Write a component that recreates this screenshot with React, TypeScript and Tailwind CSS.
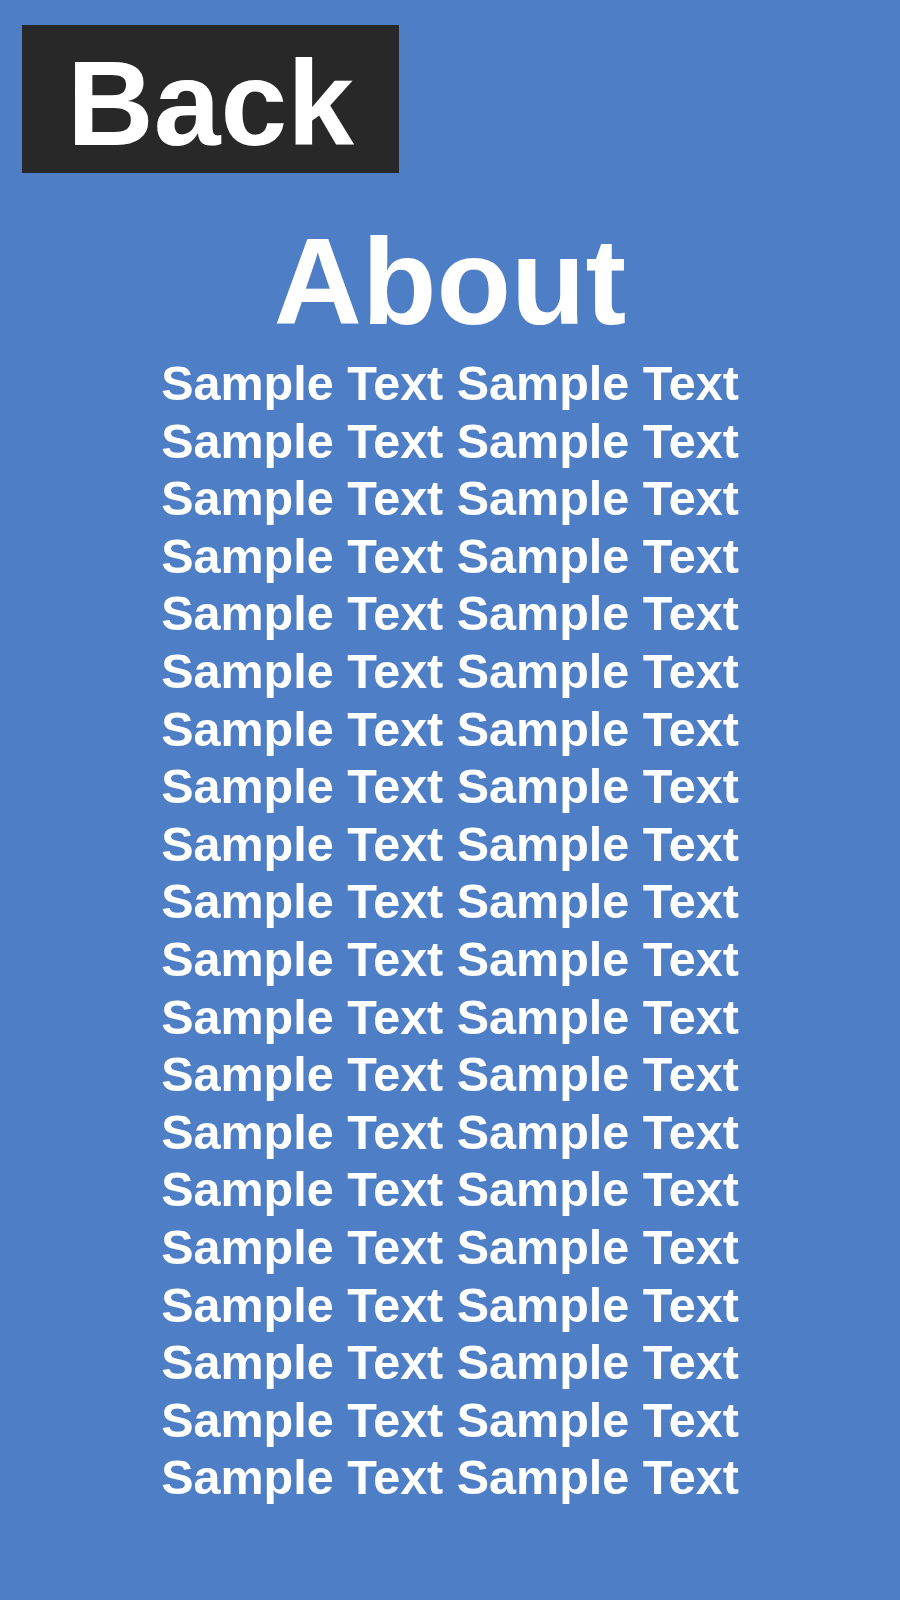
import React from "react";

export default function App() {
  const lines = Array.from({ length: 20 });
  return (
    <div
      className="w-[900px] h-[1600px] bg-[#4e7ec6] text-white font-bold overflow-hidden flex flex-col"
      style={{ fontFamily: '"Liberation Sans", Arial, sans-serif' }}
    >
      <div className="pt-[25px] pl-[22px] flex">
        <button className="w-[377px] h-[148px] bg-[#282828] text-white text-[120px] leading-[134px] pt-[11px] flex justify-center items-start">
          Back
        </button>
      </div>
      <h1 className="mt-[42px] text-center text-[122px] leading-[134px]">About</h1>
      <div className="mt-[6px] flex flex-col items-center text-[48.5px] leading-[57.6px]">
        {lines.map((_, i) => (
          <div key={i}>Sample Text Sample Text</div>
        ))}
      </div>
    </div>
  );
}
